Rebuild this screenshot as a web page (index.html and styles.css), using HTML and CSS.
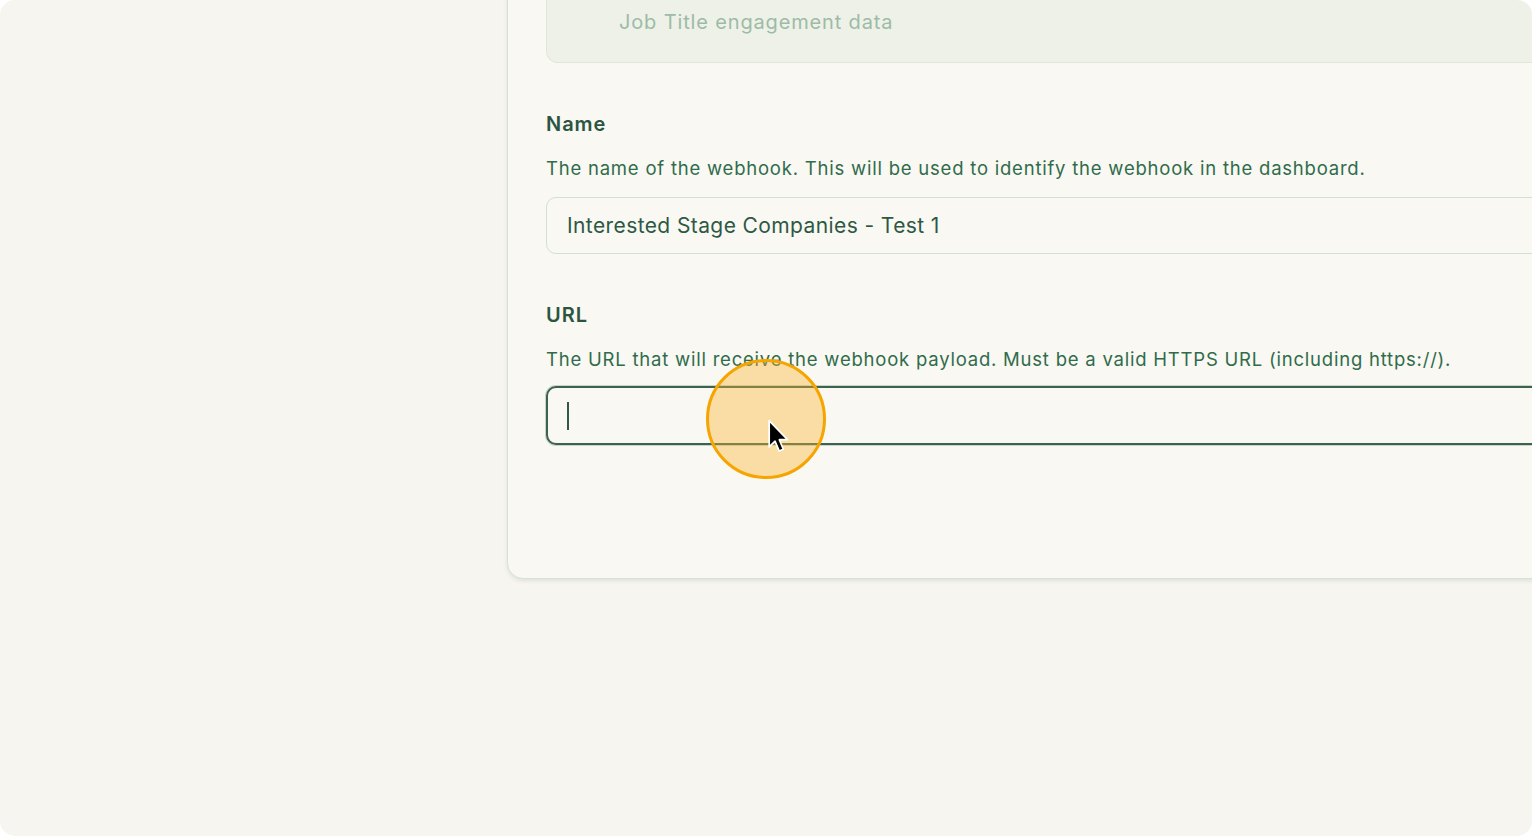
FILE: index.html
```html
<!DOCTYPE html>
<html lang="en">
<head>
    <meta charset="UTF-8">
    <meta name="viewport" content="width=device-width, initial-scale=1.0">
    <title>New Webhook</title>
    <link rel="stylesheet" href="styles.css">
</head>
<body>
    <div class="screen">
        <div class="card">
            <div class="source-box">
                <div class="source-text">Job Title engagement data</div>
            </div>

            <div class="field">
                <div class="field-label">Name</div>
                <div class="field-help">The name of the webhook. This will be used to identify the webhook in the dashboard.</div>
                <div class="input">Interested Stage Companies - Test 1</div>
            </div>

            <div class="field">
                <div class="field-label">URL</div>
                <div class="field-help">The URL that will receive the webhook payload. Must be a valid HTTPS URL (including https://).</div>
                <div class="input input-focus">
                    <span class="caret"></span>
                    <div class="click-ring">
                        <svg class="pointer" width="24" height="36" viewBox="0 0 22 33">
                            <path d="M2 1.5 L2 25.5 L7.4 20.4 L11.2 29.4 L15 27.7 L11.3 19 L18.8 19 Z" fill="#000" stroke="#fff" stroke-width="1.6" stroke-linejoin="round"/>
                        </svg>
                    </div>
                </div>
            </div>
        </div>
    </div>
</body>
</html>
```

FILE: styles.css
```css
html, body {
    margin: 0;
    padding: 0;
    background: #ffffff;
}

.screen {
    width: 1532px;
    height: 836px;
    background-color: #f7f5ef;
    border-radius: 15px;
    overflow: hidden;
    font-family: Inter, "Noto Sans", sans-serif;
}

.card {
    margin-top: -38px;
    margin-left: 507px;
    width: 1100px;
    box-sizing: border-box;
    padding: 0 38px 133px 38px;
    background-color: #f9f8f3;
    border: 1.5px solid #d2e3d8;
    border-radius: 16px;
    box-shadow: 0 2px 4px rgba(60, 90, 70, 0.12);
}

.source-box {
    height: 100px;
    box-sizing: border-box;
    padding: 45px 0 0 72px;
    background-color: #eef1e8;
    border: 1px solid #dde7dc;
    border-top: none;
    border-radius: 0 0 12px 12px;
}

.source-text {
    font-size: 20px;
    line-height: 28px;
    letter-spacing: 0.85px;
    color: #9dbba6;
}

.field {
    margin-top: 47px;
}

.field-label {
    font-size: 20px;
    line-height: 28px;
    font-weight: 600;
    letter-spacing: 0.95px;
    color: #2b5540;
}

.field-help {
    margin-top: 17px;
    font-size: 18.5px;
    line-height: 26px;
    letter-spacing: 0.78px;
    color: #306c4b;
}

.input {
    margin-top: 16px;
    height: 57px;
    box-sizing: border-box;
    padding: 0 20px;
    display: flex;
    align-items: center;
    border: 1.5px solid #cfe1d5;
    border-radius: 10px;
    font-size: 21px;
    letter-spacing: 0.4px;
    color: #2e5844;
    background-color: #f9f8f3;
    position: relative;
}

.input-focus {
    margin-top: 14px;
    height: 59px;
    padding-left: 19px;
    border: 2px solid #3c6350;
    box-shadow: 0 0 0 1px rgba(60, 99, 80, 0.25);
}

.caret {
    display: block;
    width: 2px;
    height: 28px;
    background-color: #2f5a45;
}

.click-ring {
    position: absolute;
    left: 158px;
    top: -29px;
    width: 120px;
    height: 120px;
    box-sizing: border-box;
    border-radius: 50%;
    border: 3.5px solid #f6a400;
    background-color: rgba(250, 175, 40, 0.38);
}

.pointer {
    position: absolute;
    left: 58px;
    top: 57px;
}
```
